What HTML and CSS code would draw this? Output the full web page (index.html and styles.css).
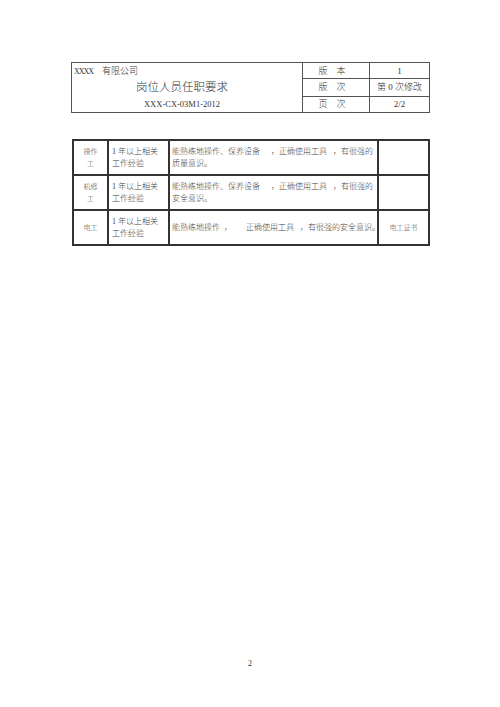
FILE: index.html
```html
<!DOCTYPE html>
<html lang="zh-CN">
<head>
<meta charset="utf-8">
<title>岗位人员任职要求</title>
<link rel="stylesheet" href="styles.css">
</head>
<body>
<div class="page">
  <table class="head">
    <colgroup>
      <col class="h1"><col class="h2"><col class="h3">
    </colgroup>
    <tr class="r1">
      <td class="left" rowspan="3">
        <div class="l1"><span class="lat">XXXX</span>　有限公司</div>
        <div class="l2">岗位人员任职要求</div>
        <div class="l3"><span class="lat">XXX-CX-03M1-2012</span></div>
      </td>
      <td class="lab">版　本</td>
      <td class="val"><span class="lat">1</span></td>
    </tr>
    <tr class="r2">
      <td class="lab">版　次</td>
      <td class="val">第 <span class="lat">0</span> 次修改</td>
    </tr>
    <tr class="r3">
      <td class="lab">页　次</td>
      <td class="val"><span class="lat">2/2</span></td>
    </tr>
  </table>

  <table class="req">
    <colgroup>
      <col class="c1"><col class="c2"><col class="c3"><col class="c4">
    </colgroup>
    <tr>
      <td class="name">操作<br>工</td>
      <td class="exp"><span class="lat">1</span> 年以上相关<br>工作经验</td>
      <td class="skill">能熟练地操作、保养设备<span class="g1"></span>，正确使用工具<span class="g2"></span>，有很强的<br>质量意识。</td>
      <td class="cert"></td>
    </tr>
    <tr>
      <td class="name">机修<br>工</td>
      <td class="exp"><span class="lat">1</span> 年以上相关<br>工作经验</td>
      <td class="skill">能熟练地操作、保养设备<span class="g1"></span>，正确使用工具<span class="g2"></span>，有很强的<br>安全意识。</td>
      <td class="cert"></td>
    </tr>
    <tr>
      <td class="name">电工</td>
      <td class="exp"><span class="lat">1</span> 年以上相关<br>工作经验</td>
      <td class="skill">能熟练地操作<span class="g3"></span>，<span class="g4"></span>正确使用工具<span class="g2"></span>，有很强的安全意识。</td>
      <td class="cert">电工证书</td>
    </tr>
  </table>

  <div class="pageno">2</div>
</div>
</body>
</html>
```

FILE: styles.css
```css
html, body {
  margin: 0;
  padding: 0;
  background: #ffffff;
}

body {
  font-family: "Liberation Serif", "Noto Sans CJK SC", serif;
  font-weight: 300;
  color: #333333;
}

.page {
  width: 500px;
  height: 707px;
  box-sizing: border-box;
  padding-top: 62px;
  display: flex;
  flex-direction: column;
}

.lat {
  font-family: "Liberation Serif", serif;
  font-weight: 400;
}

/* ---------- header table ---------- */
.head {
  margin-left: 71px;
  width: 358px;
  border-collapse: collapse;
  table-layout: fixed;
  font-size: 9px;
}

.head td {
  border: 1px solid #555555;
  padding: 0;
}

.h1 { width: 231px; }
.h2 { width: 67px; }
.h3 { width: 60px; }

.head .r1 td.lab, .head .r1 td.val { height: 15px; }
.head .r2 td { height: 16px; }
.head .r3 td { height: 15px; }

.left {
  vertical-align: top;
}

.l1 {
  height: 16px;
  line-height: 16px;
  padding-left: 2px;
  font-size: 9px;
}

.l1 .lat {
  font-size: 8px;
  letter-spacing: -1px;
}

.l2 {
  height: 17px;
  line-height: 17px;
  text-align: center;
  font-size: 11.5px;
  padding-right: 10px;
}

.l3 {
  height: 16px;
  line-height: 16px;
  text-align: center;
  font-size: 8.5px;
  padding-right: 10px;
}

.lab {
  text-align: center;
  padding-right: 8px !important;
  line-height: 14px;
}

.val {
  text-align: center;
  line-height: 14px;
}

.val .lat { font-size: 9px; }

/* ---------- requirement table ---------- */
.req {
  margin-top: 26px;
  margin-left: 72px;
  width: 356px;
  border-collapse: collapse;
  table-layout: fixed;
  font-size: 8px;
  line-height: 12px;
  color: #444444;
}

.req td {
  border: 2px solid #333333;
  height: 33px;
  padding: 0;
  vertical-align: middle;
}

.c1 { width: 35px; }
.c2 { width: 61px; }
.c3 { width: 209px; }
.c4 { width: 51px; }

.name {
  text-align: center;
  font-size: 7px;
}

.exp {
  padding-left: 3px !important;
}

.exp .lat { font-size: 8px; }

.skill {
  padding-left: 2px !important;
  white-space: nowrap;
}

.cert {
  text-align: center;
  font-size: 7px;
}

.g1 { display: inline-block; width: 11px; }
.g2 { display: inline-block; width: 6px; }
.g3 { display: inline-block; width: 4px; }
.g4 { display: inline-block; width: 14px; }

/* ---------- page number ---------- */
.pageno {
  margin-top: auto;
  padding-bottom: 38px;
  text-align: center;
  font-size: 8px;
  line-height: 10px;
}
```
